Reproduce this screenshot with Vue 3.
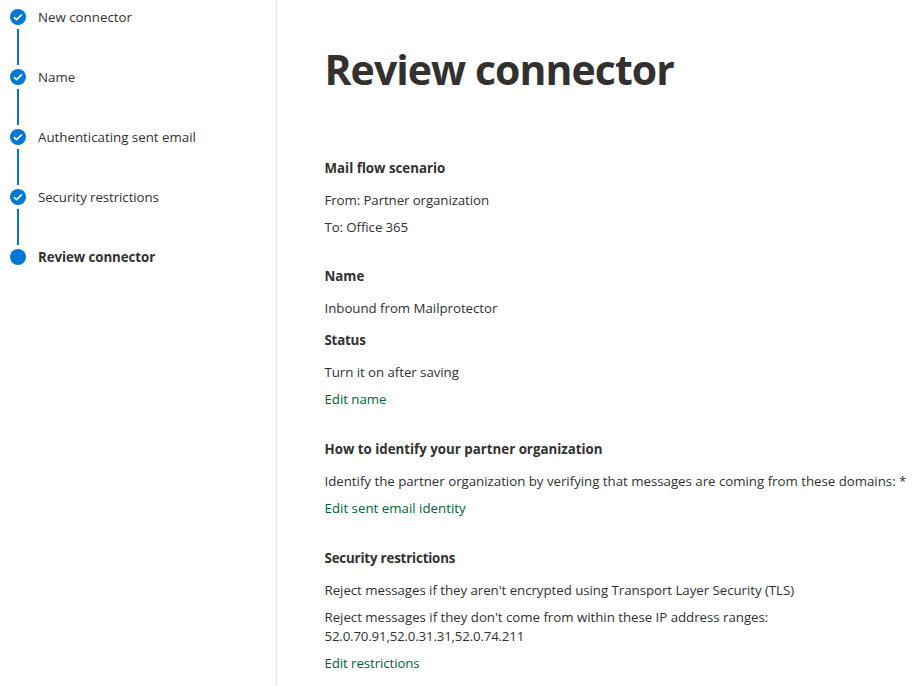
<template>
  <div class="wizard">
    <nav class="steps">
      <div v-for="(step, i) in steps" :key="step.label" class="step">
        <div class="step-track">
          <svg class="step-icon" width="16" height="16" viewBox="0 0 16 16">
            <circle cx="8" cy="8" r="8" fill="#0078d4" />
            <path v-if="i < current" d="M3.9 8.2l2.6 2.5 5.5-5.3" fill="none" stroke="#fff" stroke-width="1.6" />
          </svg>
          <span v-if="i < current" class="step-line"></span>
        </div>
        <span class="step-label" :class="{ active: i === current }" :style="tracking(step)">{{ step.label }}</span>
      </div>
    </nav>

    <main class="content">
      <h1>Review connector</h1>

      <section v-for="section in sections" :key="section.id" class="section" :class="section.id">
        <template v-for="row in section.rows" :key="row.text">
          <h2 v-if="row.type === 'heading'" :style="tracking(row)">{{ row.text }}</h2>
          <a v-else-if="row.type === 'link'" href="#" :style="tracking(row)" @click.prevent>{{ row.text }}</a>
          <p v-else :style="tracking(row)">
            {{ row.text }}
            <span v-if="row.ranges" class="ranges">{{ row.ranges.join(',') }}</span>
          </p>
        </template>
      </section>
    </main>
  </div>
</template>

<script setup>
import { ref } from 'vue';

const steps = [
  { label: 'New connector' },
  { label: 'Name' },
  { label: 'Authenticating sent email' },
  { label: 'Security restrictions', track: -0.09 },
  { label: 'Review connector', track: -0.07 },
];
const current = ref(4);

const sections = [
  {
    id: 'scenario',
    rows: [
      { type: 'heading', text: 'Mail flow scenario' },
      { type: 'text', text: 'From: Partner organization', track: -0.1 },
      { type: 'text', text: 'To: Office 365', track: -0.1 },
    ],
  },
  {
    id: 'name',
    rows: [
      { type: 'heading', text: 'Name' },
      { type: 'text', text: 'Inbound from Mailprotector', track: -0.04 },
      { type: 'heading', text: 'Status', track: -0.2 },
      { type: 'text', text: 'Turn it on after saving', track: -0.06 },
      { type: 'link', text: 'Edit name', track: -0.05 },
    ],
  },
  {
    id: 'identity',
    rows: [
      { type: 'heading', text: 'How to identify your partner organization' },
      {
        type: 'text',
        text: 'Identify the partner organization by verifying that messages are coming from these domains: *',
        track: -0.025,
      },
      { type: 'link', text: 'Edit sent email identity' },
    ],
  },
  {
    id: 'restrictions',
    rows: [
      { type: 'heading', text: 'Security restrictions', track: -0.17 },
      {
        type: 'text',
        text: "Reject messages if they aren't encrypted using Transport Layer Security (TLS)",
        track: -0.05,
      },
      {
        type: 'text',
        text: "Reject messages if they don't come from within these IP address ranges:",
        ranges: ['52.0.70.91', '52.0.31.31', '52.0.74.211'],
        track: -0.035,
      },
      { type: 'link', text: 'Edit restrictions', track: -0.1 },
    ],
  },
];

function tracking(item) {
  return item.track ? { letterSpacing: item.track + 'px' } : null;
}
</script>

<style>
body {
  margin: 0;
  background: #fff;
  overflow: hidden;
}
</style>

<style scoped>
.wizard {
  display: flex;
  height: 686px;
  overflow: hidden;
  font-family: 'Open Sans', 'Noto Sans', sans-serif;
  font-size: 13.3px;
  line-height: 19px;
  color: #323130;
}
.steps {
  flex: none;
  width: 266px;
  padding: 9px 0 0 10px;
  border-right: 1px solid #e6e6e6;
}
.step {
  display: flex;
  height: 60px;
}
.step-track {
  display: flex;
  flex-direction: column;
  align-items: center;
  width: 16px;
  margin-right: 12px;
}
.step-icon {
  display: block;
  flex: none;
}
.step-line {
  width: 2px;
  height: 36px;
  margin-top: 4px;
  background: #0078d4;
}
.step-label {
  margin-top: -1px;
  white-space: nowrap;
}
.step-label.active {
  font-weight: 700;
}
.content {
  flex: 1;
  padding: 41px 0 0 47.5px;
}
h1 {
  margin: 0 0 62px;
  font-size: 41px;
  line-height: 56px;
  font-weight: 700;
  letter-spacing: -0.95px;
  white-space: nowrap;
}
.section {
  display: flex;
  flex-direction: column;
  align-items: flex-start;
  margin-bottom: 31px;
}
.section.scenario {
  margin-bottom: 30px;
}
h2 {
  margin: 0 0 13px;
  font-size: 13.3px;
  line-height: 19px;
  font-weight: 700;
}
p {
  margin: 0;
  white-space: nowrap;
}
p + p,
p + a {
  margin-top: 8px;
}
p + h2 {
  margin-top: 13px;
}
.ranges {
  display: block;
  letter-spacing: -0.18px;
}
a {
  color: #006534;
  text-decoration: none;
}
</style>
